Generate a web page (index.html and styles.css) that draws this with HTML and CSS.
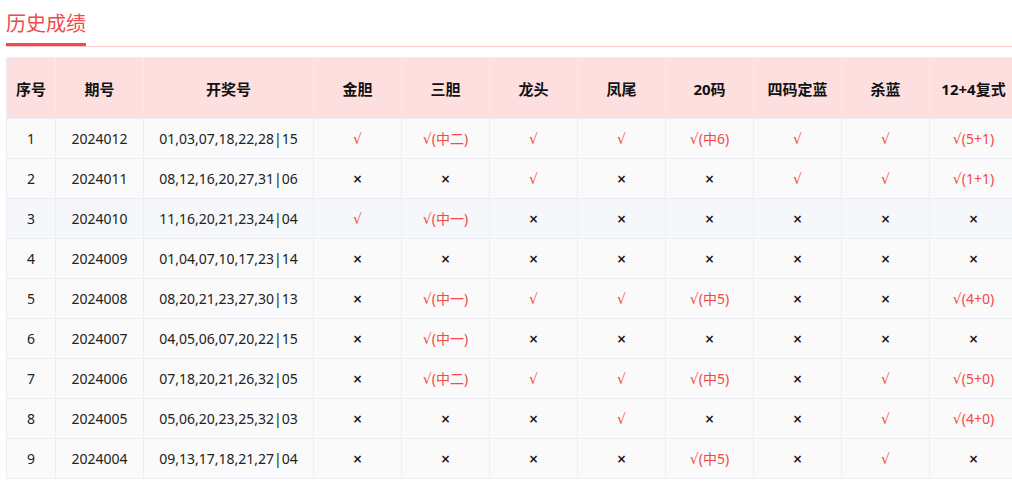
FILE: index.html
```html
<!DOCTYPE html>
<html lang="zh-CN">
<head>
<meta charset="utf-8">
<title>历史成绩</title>
<link rel="stylesheet" href="styles.css">
</head>
<body>
<div class="page">
  <div class="tabs"><span class="tab-title">历史成绩</span></div>
  <div class="table-wrap">
    <table class="history">
      <colgroup>
        <col class="c-idx"><col class="c-issue"><col class="c-nums">
        <col class="c-std"><col class="c-std"><col class="c-std"><col class="c-std">
        <col class="c-std"><col class="c-std"><col class="c-std"><col class="c-std">
      </colgroup>
      <thead>
        <tr><th>序号</th><th>期号</th><th>开奖号</th><th>金胆</th><th>三胆</th><th>龙头</th><th>凤尾</th><th>20码</th><th>四码定蓝</th><th>杀蓝</th><th>12+4复式</th></tr>
      </thead>
      <tbody>
        <tr><td>1</td><td>2024012</td><td>01,03,07,18,22,28|15</td><td class="hit">√</td><td class="hit">√(中二)</td><td class="hit">√</td><td class="hit">√</td><td class="hit">√(中6)</td><td class="hit">√</td><td class="hit">√</td><td class="hit">√(5+1)</td></tr>
        <tr><td>2</td><td>2024011</td><td>08,12,16,20,27,31|06</td><td class="miss">×</td><td class="miss">×</td><td class="hit">√</td><td class="miss">×</td><td class="miss">×</td><td class="hit">√</td><td class="hit">√</td><td class="hit">√(1+1)</td></tr>
        <tr class="hover"><td>3</td><td>2024010</td><td>11,16,20,21,23,24|04</td><td class="hit">√</td><td class="hit">√(中一)</td><td class="miss">×</td><td class="miss">×</td><td class="miss">×</td><td class="miss">×</td><td class="miss">×</td><td class="miss">×</td></tr>
        <tr><td>4</td><td>2024009</td><td>01,04,07,10,17,23|14</td><td class="miss">×</td><td class="miss">×</td><td class="miss">×</td><td class="miss">×</td><td class="miss">×</td><td class="miss">×</td><td class="miss">×</td><td class="miss">×</td></tr>
        <tr><td>5</td><td>2024008</td><td>08,20,21,23,27,30|13</td><td class="miss">×</td><td class="hit">√(中一)</td><td class="hit">√</td><td class="hit">√</td><td class="hit">√(中5)</td><td class="miss">×</td><td class="miss">×</td><td class="hit">√(4+0)</td></tr>
        <tr><td>6</td><td>2024007</td><td>04,05,06,07,20,22|15</td><td class="miss">×</td><td class="hit">√(中一)</td><td class="miss">×</td><td class="miss">×</td><td class="miss">×</td><td class="miss">×</td><td class="miss">×</td><td class="miss">×</td></tr>
        <tr><td>7</td><td>2024006</td><td>07,18,20,21,26,32|05</td><td class="miss">×</td><td class="hit">√(中二)</td><td class="hit">√</td><td class="hit">√</td><td class="hit">√(中5)</td><td class="miss">×</td><td class="hit">√</td><td class="hit">√(5+0)</td></tr>
        <tr><td>8</td><td>2024005</td><td>05,06,20,23,25,32|03</td><td class="miss">×</td><td class="miss">×</td><td class="miss">×</td><td class="hit">√</td><td class="miss">×</td><td class="miss">×</td><td class="hit">√</td><td class="hit">√(4+0)</td></tr>
        <tr><td>9</td><td>2024004</td><td>09,13,17,18,21,27|04</td><td class="miss">×</td><td class="miss">×</td><td class="miss">×</td><td class="miss">×</td><td class="hit">√(中5)</td><td class="miss">×</td><td class="hit">√</td><td class="miss">×</td></tr>
      </tbody>
    </table>
  </div>
</div>
</body>
</html>
```

FILE: styles.css
```css
html, body {
  margin: 0;
  padding: 0;
  background: #ffffff;
  overflow: hidden;
}

body {
  font-family: "Noto Sans", "DejaVu Sans", "Noto Sans CJK SC", sans-serif;
  color: #222;
}

.page {
  padding-left: 6px;
  width: 1006px;
  overflow: hidden;
}

.tabs {
  border-bottom: 1px solid #fcc7c9;
  display: flex;
}

.tab-title {
  display: block;
  width: 80px;
  padding-top: 8px;
  padding-bottom: 5px;
  font-family: "Noto Sans CJK SC", sans-serif;
  font-size: 20px;
  line-height: 30px;
  color: #f4474a;
  white-space: nowrap;
  border-bottom: 3px solid #f2484b;
}

.table-wrap {
  margin-top: 10px;
  width: 1011px;
}

.history {
  width: 1011px;
  table-layout: fixed;
  border-collapse: collapse;
  font-size: 14px;
}

.c-idx { width: 49px; }
.c-issue { width: 88px; }
.c-nums { width: 170px; }
.c-std { width: 88px; }

.history th,
.history td {
  border: 1px solid #ebeef5;
  text-align: center;
  padding: 0;
  white-space: nowrap;
}

.history th {
  height: 60px;
  background: #fddfe0;
  font-family: "Noto Sans", "Noto Sans CJK SC", sans-serif;
  font-weight: bold;
  font-size: 15px;
  color: #111;
}

.history td {
  height: 39px;
  background: #fafafa;
  color: #222;
  line-height: 20px;
}

.history tr.hover td {
  background: #f5f7fa;
}

.history td.hit {
  color: #f4474a;
}

.history td.miss {
  font-family: "DejaVu Sans", sans-serif;
  font-size: 12px;
  font-weight: bold;
  color: #111;
}
```
